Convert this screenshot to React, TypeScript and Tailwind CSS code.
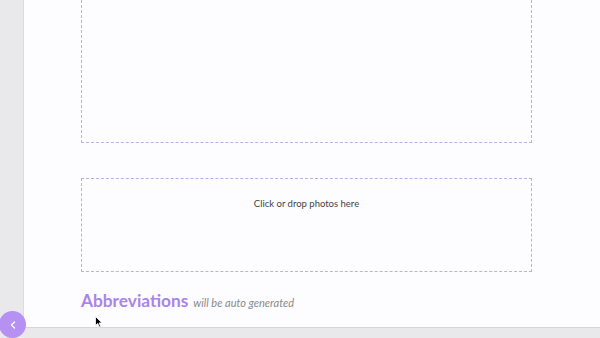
export default function App() {
  return (
    <div className="relative w-[600px] h-[338px] overflow-hidden flex flex-col bg-[#e9e8ea] font-['Lato',sans-serif]">
      <div className="flex flex-1 min-h-0">
        {/* left rail */}
        <div className="w-[24px] shrink-0 bg-[#e9e8ea] border-r border-[#dcdbdd]" />

        {/* page */}
        <div className="flex-1 bg-[#fdfcfe] pl-[56px] flex flex-col">
          <div className="ml-px w-[451px] h-[143px] border-x border-b border-dashed border-[#bcaee6]" />

          <div className="ml-px w-[451px] h-[94px] mt-[35px] border border-dashed border-[#bcaee6] flex justify-center pt-[20px]">
            <span className="text-[9.5px] text-[#444] leading-none">Click or drop photos here</span>
          </div>

          <div className="ml-px mt-[20px] flex items-baseline gap-[5px]">
            <h2 className="text-[17.3px] font-bold text-[#a984ec] leading-none">Abbreviations</h2>
            <span className="text-[11px] italic text-[#8a8a8a] leading-none">will be auto generated</span>
          </div>
        </div>
      </div>

      {/* bottom bar */}
      <div className="h-[11px] shrink-0 bg-[#e9e8ea] border-t border-[#d6d5d7]" />

      {/* collapse button */}
      <button className="absolute left-[-1px] top-[311px] w-[27px] h-[27px] rounded-full bg-[#b690f2] flex items-center justify-center">
        <svg width="10" height="10" viewBox="0 0 10 10" fill="none">
          <path d="M6.5 2 L3.5 5 L6.5 8" stroke="white" strokeWidth="1.4" strokeLinecap="round" strokeLinejoin="round" />
        </svg>
      </button>

      {/* cursor */}
      <svg className="absolute left-[95px] top-[316px]" width="8" height="12" viewBox="0 0 8 12">
        <path d="M0.5 0.5 L0.5 9.5 L2.7 7.4 L4.3 11 L5.6 10.4 L4.1 6.9 L7 6.9 Z" fill="black" stroke="white" strokeWidth="0.8" />
      </svg>
    </div>
  );
}
